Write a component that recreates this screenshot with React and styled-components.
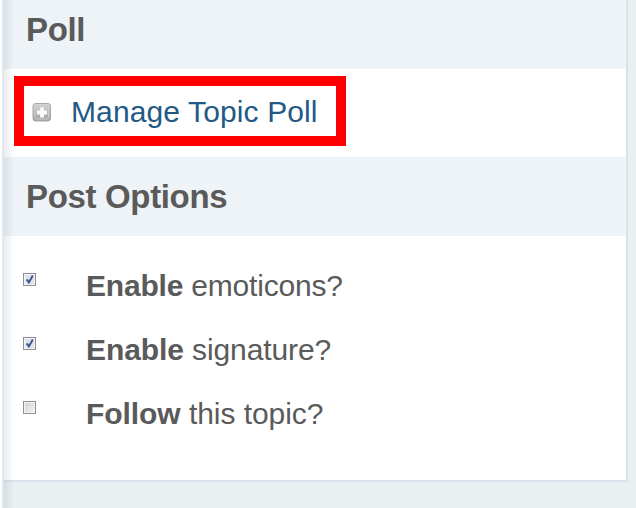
import styled, { createGlobalStyle } from 'styled-components';

const options = [
  { strong: 'Enable', text: 'emoticons?', checked: true, spacing: '-0.2px' },
  { strong: 'Enable', text: 'signature?', checked: true, spacing: '-0.1px' },
  { strong: 'Follow', text: 'this topic?', checked: false, spacing: '-0.06px' },
];

const PlusIcon = () => (
  <svg width="20" height="20" viewBox="0 0 20 20">
    <defs>
      <linearGradient id="plusFill" x1="0" y1="0" x2="0" y2="1">
        <stop offset="0" stopColor="#d6d6d6" />
        <stop offset="1" stopColor="#a0a0a0" />
      </linearGradient>
    </defs>
    <rect x="1" y="1.5" width="17.5" height="17.5" rx="2.5" fill="url(#plusFill)" stroke="#a8a8a8" />
    <rect x="3" y="3.5" width="13.5" height="13.5" rx="1.5" fill="none" stroke="#cdcdcd" />
    <path d="M8 5.5h4v3h3v4h-3v3H8v-3H5v-4h3z" fill="#fafafa" />
  </svg>
);

const CheckIcon = () => (
  <svg width="11" height="11" viewBox="0 0 11 11">
    <path d="M2.7 5.4L4.9 8.4L8.8 1.6" fill="none" stroke="#3f578f" strokeWidth="2" />
  </svg>
);

const App = () => {
  return (
    <>
      <GlobalStyle />
      <Page>
        <Panel>
          <SectionTitle>Poll</SectionTitle>
          <PollRow>
            <PollButton>
              <PlusIcon />
              Manage Topic Poll
            </PollButton>
          </PollRow>
          <SectionTitle>Post Options</SectionTitle>
          <OptionList>
            {options.map((option) => (
              <OptionItem key={option.text} $spacing={option.spacing}>
                <CheckBox role="checkbox" aria-checked={option.checked} $checked={option.checked}>
                  {option.checked && <CheckIcon />}
                </CheckBox>
                <span>
                  <strong>{option.strong}</strong> {option.text}
                </span>
              </OptionItem>
            ))}
          </OptionList>
        </Panel>
      </Page>
    </>
  );
};

export default App;

const GlobalStyle = createGlobalStyle`
  * {
    box-sizing: border-box;
  }

  body {
    margin: 0;
    overflow: hidden;
    background-color: #fff;
    font-family: 'Liberation Sans', Arial, sans-serif;
    color: #5a5a5a;
  }
`;

const Page = styled.div`
  position: relative;
  height: 508px;
  margin-left: 2px;
  border-left: 2px solid #e1e7ee;
  background-color: #e9f0f2;
  overflow: hidden;

  /* soft shadow along the left edge */
  &::after {
    content: '';
    position: absolute;
    top: 0;
    bottom: 0;
    left: 0;
    width: 10px;
    background: linear-gradient(to right, rgba(90, 105, 125, 0.13), rgba(90, 105, 125, 0));
  }
`;

const Panel = styled.section`
  width: 624px;
  height: 492px;
  margin-top: -10px;
  background-color: #fff;
  border-right: 2px solid #dae3ec;
  border-bottom: 2px solid #dae3ec;
`;

const SectionTitle = styled.h3`
  height: 79px;
  margin: 0;
  padding-left: 22px;
  line-height: 79px;
  font-size: 33px;
  letter-spacing: -0.34px;
  background-color: #edf3f6;
`;

const PollRow = styled.div`
  height: 88px;
  padding: 7px 10px;
`;

const PollButton = styled.a`
  display: flex;
  align-items: center;
  gap: 19px;
  width: 332px;
  height: 70px;
  padding: 1px 0 0 8px;
  border: 10px solid #fe0000;
  font-size: 30px;
  letter-spacing: 0.12px;
  color: #225985;
  white-space: nowrap;
`;

const OptionList = styled.ul`
  margin: 0;
  padding: 18px 0 0 19px;
  list-style: none;
`;

const OptionItem = styled.li`
  display: flex;
  align-items: flex-start;
  gap: 50px;
  height: 64px;
  line-height: 64px;
  font-size: 30px;
  letter-spacing: ${(props) => props.$spacing};
`;

const CheckBox = styled.span`
  display: flex;
  align-items: center;
  justify-content: center;
  width: 13px;
  height: 13px;
  margin-top: 19px;
  border: 1px solid #8e8f8f;
  background: ${(props) => (props.$checked ? '#dfe5ee' : 'linear-gradient(135deg, #cfd1d3, #f3f3f3)')};
  box-shadow: inset 0 0 0 1px #f4f4f4;
`;
